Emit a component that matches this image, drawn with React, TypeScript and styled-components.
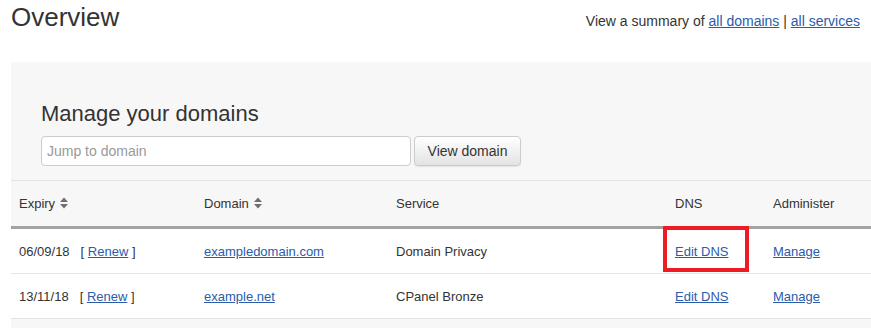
import styled, { createGlobalStyle } from "styled-components";

const GlobalStyle = createGlobalStyle`
  body {
    margin: 0;
    background: #fff;
    font-family: "Liberation Sans", Arial, sans-serif;
    color: #333;
  }
`;

const Header = styled.header`
  height: 62px;
  box-sizing: border-box;
  padding: 2px 11px 0 11px;
  display: flex;
  align-items: baseline;
  justify-content: space-between;
`;

const Title = styled.h1`
  margin: 0;
  font-size: 26px;
  font-weight: 400;
  color: #333;
`;

const Summary = styled.div`
  font-size: 14px;
  color: #333;
`;

const Link = styled.a`
  color: #2a5caa;
  text-decoration: underline;
  cursor: pointer;
`;

const Panel = styled.section`
  margin-left: 11px;
  background: #f7f7f7;
  padding: 39px 0 9px 0;
`;

const PanelTitle = styled.h2`
  margin: 0 0 10px 30px;
  font-size: 22px;
  font-weight: 400;
  color: #333;
  line-height: 25px;
`;

const SearchForm = styled.form`
  margin: 0 0 14px 30px;
  display: flex;
  gap: 3px;
`;

const SearchInput = styled.input`
  width: 370px;
  height: 30px;
  box-sizing: border-box;
  border: 1px solid #ccc;
  border-radius: 4px;
  background: #fff;
  padding: 0 5px;
  font-family: inherit;
  font-size: 14px;
  color: #333;
  outline: none;
  &::placeholder {
    color: #999;
  }
`;

const Button = styled.button`
  width: 107px;
  height: 30px;
  box-sizing: border-box;
  border: 1px solid #ccc;
  border-radius: 4px;
  background: linear-gradient(#fff, #e3e3e3);
  font-family: inherit;
  font-size: 14px;
  color: #333;
  padding: 0 12px;
  box-shadow: 0 1px 1px rgba(0, 0, 0, 0.08);
`;

const Table = styled.table`
  width: 860px;
  border-collapse: collapse;
  table-layout: fixed;
  font-size: 13px;
`;

const HeadCell = styled.th`
  height: 45px;
  padding: 0 8px;
  text-align: left;
  font-weight: 400;
  color: #333;
  border-top: 1px solid #e3e3e3;
  border-bottom: 3px solid #a3a3a3;
  white-space: nowrap;
`;

const Row = styled.tr`
  background: #fff;
  border-bottom: 1px solid #e3e3e3;
`;

const Cell = styled.td`
  height: 44px;
  padding: 0 8px;
  color: #333;
  position: relative;
  white-space: nowrap;
`;

const Highlight = styled.span`
  position: absolute;
  left: -4px;
  top: -3px;
  width: 86px;
  height: 46px;
  box-sizing: border-box;
  border: 4px solid #ed1c24;
  pointer-events: none;
`;

const Renew = styled.span`
  margin-left: 11px;
`;

const SortIcon = styled.svg`
  width: 8px;
  height: 14px;
  margin-left: 5px;
  vertical-align: -2px;
`;

function Sort() {
  return (
    <SortIcon viewBox="0 0 8 14">
      <path d="M0 6 L4 1.5 L8 6 Z M0 8 L4 12.5 L8 8 Z" fill="#6f6f6f" />
    </SortIcon>
  );
}

const domains = [
  { expiry: "06/09/18", domain: "exampledomain.com", service: "Domain Privacy", highlight: true },
  { expiry: "13/11/18", domain: "example.net", service: "CPanel Bronze", highlight: false },
];

export default function App() {
  return (
    <>
      <GlobalStyle />
      <Header>
        <Title>Overview</Title>
        <Summary>
          View a summary of <Link>all domains</Link> | <Link>all services</Link>
        </Summary>
      </Header>
      <Panel>
        <PanelTitle>Manage your domains</PanelTitle>
        <SearchForm onSubmit={(e) => e.preventDefault()}>
          <SearchInput placeholder="Jump to domain" />
          <Button type="submit">View domain</Button>
        </SearchForm>
        <Table>
          <colgroup>
            <col style={{ width: 185 }} />
            <col style={{ width: 192 }} />
            <col style={{ width: 279 }} />
            <col style={{ width: 98 }} />
            <col />
          </colgroup>
          <thead>
            <tr>
              <HeadCell>
                Expiry
                <Sort />
              </HeadCell>
              <HeadCell>
                Domain
                <Sort />
              </HeadCell>
              <HeadCell>Service</HeadCell>
              <HeadCell>DNS</HeadCell>
              <HeadCell>Administer</HeadCell>
            </tr>
          </thead>
          <tbody>
            {domains.map((d) => (
              <Row key={d.domain}>
                <Cell>
                  {d.expiry}
                  <Renew>
                    [ <Link>Renew</Link> ]
                  </Renew>
                </Cell>
                <Cell>
                  <Link>{d.domain}</Link>
                </Cell>
                <Cell>{d.service}</Cell>
                <Cell>
                  <Link>Edit DNS</Link>
                  {d.highlight && <Highlight />}
                </Cell>
                <Cell>
                  <Link>Manage</Link>
                </Cell>
              </Row>
            ))}
          </tbody>
        </Table>
      </Panel>
    </>
  );
}
